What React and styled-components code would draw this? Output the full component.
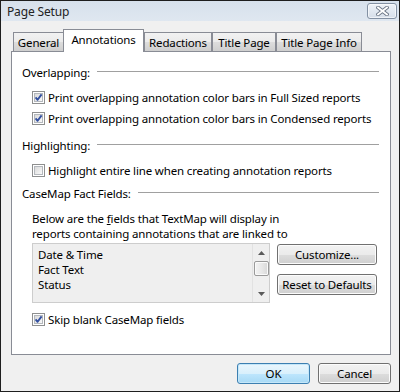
import styled, { createGlobalStyle } from "styled-components";

const GlobalStyle = createGlobalStyle`
  html, body {
    margin: 0;
    padding: 0;
    background: #fff;
  }
  body {
    font-family: "Noto Sans", "Open Sans", sans-serif;
    font-size: 11.5px;
    letter-spacing: -0.15px;
    color: #000;
  }
  * {
    box-sizing: border-box;
  }
`;

function CheckBox({ checked }) {
  return (
    <svg width="13" height="13" viewBox="0 0 13 13">
      <defs>
        <linearGradient id="cbfill" x1="0" y1="0" x2="1" y2="1">
          <stop offset="0" stopColor="#d8d8d8" />
          <stop offset="1" stopColor="#fbfbfb" />
        </linearGradient>
      </defs>
      <rect x="0.5" y="0.5" width="12" height="12" fill="#fff" stroke="#8e8f8f" />
      <rect x="2.5" y="2.5" width="8" height="8" fill="url(#cbfill)" stroke="#b4b8bd" />
      {checked && (
        <path
          d="M3.6 6.4 L5.6 8.8 L9.6 3.4"
          fill="none"
          stroke="#3350a0"
          strokeWidth="1.9"
          strokeLinejoin="round"
        />
      )}
    </svg>
  );
}

const tabs = [
  { label: "General", width: 51 },
  { label: "Annotations", width: 81, active: true },
  { label: "Redactions", width: 68 },
  { label: "Title Page", width: 64 },
  { label: "Title Page Info", width: 86 },
];

export default function App() {
  return (
    <>
      <GlobalStyle />
      <Window>
        <TitleBar>
          <span>Page Setup</span>
          <CloseButton>
            <svg width="13" height="10" viewBox="0 0 13 10">
              <path d="M2 1.5 L11 8.5 M11 1.5 L2 8.5" stroke="#6b7686" strokeWidth="3.6" strokeLinecap="square" />
              <path d="M2 1.5 L11 8.5 M11 1.5 L2 8.5" stroke="#fff" strokeWidth="1.8" strokeLinecap="square" />
            </svg>
          </CloseButton>
        </TitleBar>

        <Body>
          <TabStrip>
            {tabs.map((t) => (
              <Tab key={t.label} $width={t.width} $active={t.active}>
                {t.label}
              </Tab>
            ))}
          </TabStrip>

          <Panel>
            <SectionHeader>Overlapping:</SectionHeader>
            <CheckRow $top={6}>
              <CheckBox checked />
              <span>Print overlapping annotation color bars in Full Sized reports</span>
            </CheckRow>
            <CheckRow>
              <CheckBox checked />
              <span>Print overlapping annotation color bars in Condensed reports</span>
            </CheckRow>

            <SectionHeader $top={7}>Highlighting:</SectionHeader>
            <CheckRow $top={6}>
              <CheckBox />
              <span>Highlight entire line when creating annotation reports</span>
            </CheckRow>

            <SectionHeader $top={3}>CaseMap Fact Fields:</SectionHeader>
            <Paragraph>
              <span>
                Below are the <u>f</u>ields that TextMap will display in
              </span>
              <span>reports containing annotations that are linked to</span>
            </Paragraph>

            <FieldsRow>
              <ListBox>
                <ListItems>
                  <li>Date &amp; Time</li>
                  <li>Fact Text</li>
                  <li>Status</li>
                </ListItems>
                <ScrollBar>
                  <Arrow>
                    <svg width="7" height="4" viewBox="0 0 7 4">
                      <path d="M0 4 L3.5 0 L7 4 Z" fill="#5a5a5a" />
                    </svg>
                  </Arrow>
                  <Thumb />
                  <Track />
                  <Arrow>
                    <svg width="7" height="4" viewBox="0 0 7 4">
                      <path d="M0 0 L3.5 4 L7 0 Z" fill="#5a5a5a" />
                    </svg>
                  </Arrow>
                </ScrollBar>
              </ListBox>
              <ButtonColumn>
                <Button $wide>Customize...</Button>
                <Button $wide>Reset to Defaults</Button>
              </ButtonColumn>
            </FieldsRow>

            <CheckRow $top={6}>
              <CheckBox checked />
              <span>Skip blank CaseMap fields</span>
            </CheckRow>
          </Panel>

          <Footer>
            <Button $primary>OK</Button>
            <Button>Cancel</Button>
          </Footer>
        </Body>
      </Window>
    </>
  );
}

const Window = styled.div`
  width: 400px;
  height: 392px;
  border: 1px solid #1e1e1e;
  background: #f0f0f0;
  display: flex;
  flex-direction: column;
`;

const TitleBar = styled.div`
  height: 20px;
  display: flex;
  align-items: center;
  justify-content: space-between;
  padding: 0 2px 0 6px;
  background: linear-gradient(#d7e1ec, #dfe7f0);
  color: #222;
  font-size: 12px;
`;

const CloseButton = styled.div`
  width: 30px;
  height: 16px;
  border: 1px solid #8391a3;
  border-radius: 3px;
  background: linear-gradient(#eef2f7 0%, #e2e9f1 50%, #d6dee9 100%);
  box-shadow: inset 0 0 0 1px rgba(255, 255, 255, 0.6);
  display: flex;
  align-items: center;
  justify-content: center;
`;

const Body = styled.div`
  flex: 1;
  display: flex;
  flex-direction: column;
  padding: 8px 8px 0 10px;
`;

const TabStrip = styled.div`
  height: 22px;
  display: flex;
  align-items: flex-end;
  padding-left: 2px;
`;

const Tab = styled.div`
  width: ${(p) => p.$width}px;
  height: ${(p) => (p.$active ? 23 : 19)}px;
  margin-left: ${(p) => (p.$active ? -1 : 0)}px;
  margin-bottom: ${(p) => (p.$active ? -1 : 0)}px;
  position: relative;
  z-index: ${(p) => (p.$active ? 2 : 0)};
  border: 1px solid #898c95;
  border-bottom: none;
  display: flex;
  justify-content: center;
  align-items: center;
  padding-bottom: ${(p) => (p.$active ? 3 : 0)}px;
  white-space: nowrap;
  background: ${(p) =>
    p.$active
      ? "#fff"
      : "linear-gradient(#f2f2f2 0%, #ebebeb 50%, #dddddd 51%, #cfcfcf 100%)"};
`;

const Panel = styled.div`
  height: 304px;
  border: 1px solid #898c95;
  background: #fff;
  display: flex;
  flex-direction: column;
  padding: 11px 11px 0 10px;
`;

const SectionHeader = styled.div`
  height: 18px;
  margin-top: ${(p) => p.$top || 0}px;
  display: flex;
  align-items: center;
  gap: 7px;
  white-space: nowrap;

  &::after {
    content: "";
    flex: 1;
    height: 1px;
    margin-top: -1px;
    background: #a0a0a0;
  }
`;

const CheckRow = styled.label`
  height: 21px;
  margin-top: ${(p) => p.$top || 0}px;
  padding-left: 10px;
  display: flex;
  align-items: center;
  gap: 3px;
  white-space: nowrap;

  svg {
    flex: none;
  }
`;

const Paragraph = styled.p`
  margin: 9px 0 0;
  padding-left: 10px;
  display: flex;
  flex-direction: column;
  line-height: 15px;
  white-space: nowrap;
`;

const FieldsRow = styled.div`
  margin-top: 2px;
  padding-left: 10px;
  display: flex;
  align-items: flex-start;
  gap: 7px;
`;

const ListBox = styled.div`
  width: 238px;
  height: 60px;
  border: 1px solid #cdcdcd;
  background: #efefef;
  display: flex;
`;

const ListItems = styled.ul`
  flex: 1;
  margin: 0;
  padding: 3px 0 0 5px;
  list-style: none;
  line-height: 15px;
`;

const ScrollBar = styled.div`
  width: 17px;
  border-left: 1px solid #e2e2e2;
  display: flex;
  flex-direction: column;
  align-items: center;
`;

const Arrow = styled.div`
  height: 17px;
  width: 100%;
  display: flex;
  align-items: center;
  justify-content: center;
`;

const Thumb = styled.div`
  width: 15px;
  height: 15px;
  border: 1px solid #9a9a9a;
  border-radius: 2px;
  background: linear-gradient(90deg, #f3f3f3 0%, #e8e8e8 50%, #d8d8d8 100%);
  box-shadow: inset 0 0 0 1px #fafafa;
`;

const Track = styled.div`
  flex: 1;
`;

const ButtonColumn = styled.div`
  display: flex;
  flex-direction: column;
  gap: 9px;
  margin-top: 1px;
`;

const Button = styled.button`
  width: ${(p) => (p.$wide ? 100 : 73)}px;
  height: 21px;
  padding: 0;
  font-family: "Noto Sans", "Open Sans", sans-serif;
  font-size: 11.5px;
  letter-spacing: -0.15px;
  color: #000;
  border: 1px solid ${(p) => (p.$primary ? "#3c7fb1" : "#707070")};
  border-radius: 3px;
  background: ${(p) =>
    p.$primary
      ? "linear-gradient(#eaf6fd 0%, #d9f0fc 50%, #bee6fd 51%, #a7d9f5 100%)"
      : "linear-gradient(#f2f2f2 0%, #ebebeb 50%, #dddddd 51%, #cfcfcf 100%)"};
  box-shadow: inset 0 0 0 1px ${(p) => (p.$primary ? "#c5e7f9" : "#fcfcfc")};
`;

const Footer = styled.div`
  margin-top: 8px;
  display: flex;
  justify-content: flex-end;
  gap: 8px;
`;
